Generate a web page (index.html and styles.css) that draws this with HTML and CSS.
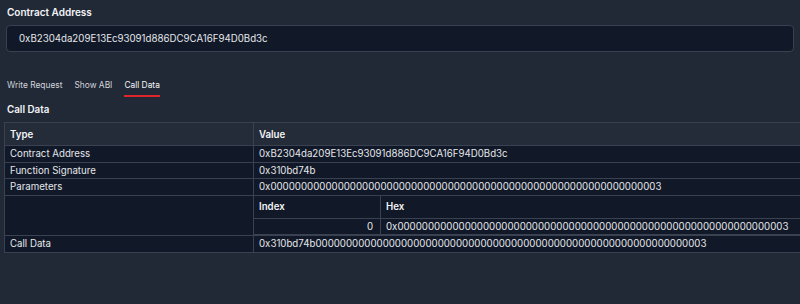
FILE: index.html
```html
<!DOCTYPE html>
<html lang="en">
<head>
    <meta charset="UTF-8">
    <meta name="viewport" content="width=device-width, initial-scale=1.0">
    <title>Call Data</title>
    <link rel="stylesheet" href="styles.css">
</head>
<body>
    <div class="page">
        <label class="field-label" for="contract-address">Contract Address</label>
        <div class="address-input" id="contract-address">0xB2304da209E13Ec93091d886DC9CA16F94D0Bd3c</div>

        <nav class="tabs">
            <a class="tab">Write Request</a>
            <a class="tab">Show ABI</a>
            <a class="tab active">Call Data</a>
        </nav>

        <h2 class="section-title">Call Data</h2>

        <table class="call-table">
            <thead>
                <tr>
                    <th class="type-col">Type</th>
                    <th>Value</th>
                </tr>
            </thead>
            <tbody>
                <tr>
                    <td>Contract Address</td>
                    <td>0xB2304da209E13Ec93091d886DC9CA16F94D0Bd3c</td>
                </tr>
                <tr>
                    <td>Function Signature</td>
                    <td>0x310bd74b</td>
                </tr>
                <tr>
                    <td>Parameters</td>
                    <td>0x0000000000000000000000000000000000000000000000000000000000000003</td>
                </tr>
                <tr>
                    <td></td>
                    <td class="nested-cell">
                        <table class="params-table">
                            <thead>
                                <tr>
                                    <th class="index-col">Index</th>
                                    <th>Hex</th>
                                </tr>
                            </thead>
                            <tbody>
                                <tr>
                                    <td class="index-col num">0</td>
                                    <td>0x0000000000000000000000000000000000000000000000000000000000000003</td>
                                </tr>
                            </tbody>
                        </table>
                    </td>
                </tr>
                <tr>
                    <td>Call Data</td>
                    <td>0x310bd74b0000000000000000000000000000000000000000000000000000000000000003</td>
                </tr>
            </tbody>
        </table>
    </div>
</body>
</html>
```

FILE: styles.css
```css
body {
    margin: 0;
    background-color: #212836;
    color: #e5e7eb;
    font-family: Inter, "Noto Sans", sans-serif;
    overflow: hidden;
}
.page {
    padding-top: 5px;
}
.field-label {
    display: block;
    margin-left: 7px;
    font-size: 10px;
    line-height: 14px;
    font-weight: 600;
    color: #f3f4f6;
}
.address-input {
    margin: 6px 6px 0 6px;
    height: 27px;
    box-sizing: border-box;
    padding: 0 12px;
    border: 1px solid #394150;
    border-radius: 4px;
    background-color: #111827;
    font-size: 9.7px;
    line-height: 25px;
    color: #e5e7eb;
}
.tabs {
    display: flex;
    gap: 12px;
    margin: 27px 0 0 7px;
}
.tab {
    font-size: 8.4px;
    line-height: 13px;
    padding-bottom: 3px;
    border-bottom: 2px solid transparent;
    color: #d1d5db;
    cursor: pointer;
}
.tab.active {
    color: #f3f4f6;
    border-bottom-color: #e0242b;
}
.section-title {
    margin: 6px 0 6px 7px;
    font-size: 9.8px;
    line-height: 13px;
    font-weight: 600;
    color: #f3f4f6;
}
.call-table {
    margin-left: 4px;
    width: 830px;
    border-collapse: collapse;
    font-size: 9.7px;
}
.call-table th,
.call-table td {
    border: 1px solid #3a4251;
    padding: 0 5px;
    text-align: left;
    white-space: nowrap;
}
.call-table > thead th {
    background-color: #242b39;
    height: 22px;
    font-weight: 600;
    color: #f3f4f6;
}
.call-table > tbody > tr > td {
    background-color: #111827;
    line-height: 15.5px;
}
.type-col {
    width: 238px;
}
.call-table td.nested-cell {
    padding: 0;
    border: none;
}
.params-table {
    width: 100%;
    border-collapse: collapse;
}
.params-table th,
.params-table td {
    border: 1px solid #3a4251;
    padding: 0 5px;
    text-align: left;
    background-color: #111827;
}
.params-table th {
    height: 22px;
    font-weight: 600;
    color: #f3f4f6;
}
.params-table td {
    line-height: 15.5px;
}
.params-table tr > :first-child {
    border-left: none;
}
.params-table tr:first-child > * {
    border-top: none;
}
.index-col {
    width: 114px;
}
.num {
    text-align: right !important;
    padding-right: 7px !important;
}
```
